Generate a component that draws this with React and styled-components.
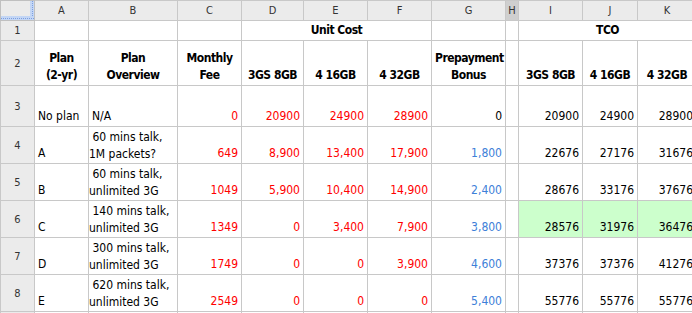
import styled, { createGlobalStyle } from "styled-components";

const GlobalStyle = createGlobalStyle`
  html, body {
    margin: 0;
    padding: 0;
    background: #ffffff;
    overflow: hidden;
  }
`;

const widths = [34, 54, 89, 64, 62, 64, 64, 74, 13, 64, 55, 59];
const letters = ["A", "B", "C", "D", "E", "F", "G", "H", "I", "J", "K"];

const RED = "#ff0000";
const BLUE = "#3d80d8";
const GREEN = "#ccffcc";

const rows = [
  {
    n: 3,
    height: 41,
    plan: "No plan",
    overview: "N/A",
    fee: "0",
    cost: ["20900", "24900", "28900"],
    bonus: "0",
    bonusColor: "#000",
    tco: ["20900", "24900", "28900"],
  },
  {
    n: 4,
    plan: "A",
    overview: " 60 mins talk,\n1M packets?",
    fee: "649",
    cost: ["8,900", "13,400", "17,900"],
    bonus: "1,800",
    tco: ["22676", "27176", "31676"],
  },
  {
    n: 5,
    plan: "B",
    overview: " 60 mins talk,\nunlimited 3G",
    fee: "1049",
    cost: ["5,900", "10,400", "14,900"],
    bonus: "2,400",
    tco: ["28676", "33176", "37676"],
  },
  {
    n: 6,
    plan: "C",
    overview: " 140 mins talk,\nunlimited 3G",
    fee: "1349",
    cost: ["0", "3,400", "7,900"],
    bonus: "3,800",
    tco: ["28576", "31976", "36476"],
    best: true,
  },
  {
    n: 7,
    plan: "D",
    overview: " 300 mins talk,\nunlimited 3G",
    fee: "1749",
    cost: ["0", "0", "3,900"],
    bonus: "4,600",
    tco: ["37376", "37376", "41276"],
  },
  {
    n: 8,
    plan: "E",
    overview: " 620 mins talk,\nunlimited 3G",
    fee: "2549",
    cost: ["0", "0", "0"],
    bonus: "5,400",
    tco: ["55776", "55776", "55776"],
  },
];

function App() {
  return (
    <>
      <GlobalStyle />
      <Sheet>
        <colgroup>
          {widths.map((w, i) => (
            <col key={i} style={{ width: w }} />
          ))}
        </colgroup>
        <thead>
          <tr>
            <Corner />
            {letters.map((l) => (
              <ColHead key={l} $selected={l === "H"}>
                {l}
              </ColHead>
            ))}
          </tr>
        </thead>
        <tbody>
          <Row $h={20}>
            <RowHead>1</RowHead>
            <Cell />
            <Cell />
            <Cell />
            <Cell colSpan={3} $align="center" $bold>
              Unit Cost
            </Cell>
            <Cell />
            <Cell />
            <Cell colSpan={3} $align="center" $bold>
              TCO
            </Cell>
          </Row>
          <Row $h={45}>
            <RowHead>2</RowHead>
            <Cell $align="center" $bold>
              Plan
              <br />
              (2-yr)
            </Cell>
            <Cell $align="center" $bold>
              Plan
              <br />
              Overview
            </Cell>
            <Cell $align="center" $bold>
              Monthly
              <br />
              Fee
            </Cell>
            <Cell $align="center" $bold>3GS 8GB</Cell>
            <Cell $align="center" $bold>4 16GB</Cell>
            <Cell $align="center" $bold>4 32GB</Cell>
            <Cell $align="center" $bold>
              Prepayment
              <br />
              Bonus
            </Cell>
            <Cell />
            <Cell $align="center" $bold>3GS 8GB</Cell>
            <Cell $align="center" $bold>4 16GB</Cell>
            <Cell $align="center" $bold>4 32GB</Cell>
          </Row>
          {rows.map((r) => (
            <Row key={r.n} $h={r.height || 37}>
              <RowHead>{r.n}</RowHead>
              <Cell>{r.plan}</Cell>
              <Cell $wrap={r.overview.includes("\n")}>{r.overview}</Cell>
              <Cell $align="right" $color={RED}>
                {r.fee}
              </Cell>
              {r.cost.map((c, i) => (
                <Cell key={i} $align="right" $color={RED}>
                  {c}
                </Cell>
              ))}
              <Cell $align="right" $color={r.bonusColor || BLUE}>
                {r.bonus}
              </Cell>
              <Cell />
              {r.tco.map((t, i) => (
                <Cell key={i} $align="right" $bg={r.best ? GREEN : undefined}>
                  {t}
                </Cell>
              ))}
            </Row>
          ))}
          <Row $h={37}>
            <RowHead />
            {letters.map((l) => (
              <Cell key={l} />
            ))}
          </Row>
        </tbody>
      </Sheet>
    </>
  );
}

const Sheet = styled.table`
  table-layout: fixed;
  border-collapse: collapse;
  width: 696px;
  font-family: "DejaVu Sans Condensed", "DejaVu Sans", sans-serif;
  font-size: 12px;
  color: #000;
`;

const Corner = styled.th`
  position: relative;
  height: 19px;
  padding: 0;
  background: #ebebeb;
  border: 1px solid #c0c0c0;

  &::before,
  &::after {
    content: "";
    position: absolute;
    background-color: #c3d6f5;
  }

  /* frozen-pane handles */
  &::before {
    right: 0;
    top: 0;
    width: 4px;
    bottom: 0;
    background-image: linear-gradient(#7d9fe0 50%, transparent 50%);
    background-size: 1px 2px;
    background-position: 2px 0;
    background-repeat: repeat-y;
  }

  &::after {
    left: 0;
    right: 0;
    bottom: 0;
    height: 4px;
    background-image: linear-gradient(90deg, #7d9fe0 50%, transparent 50%);
    background-size: 2px 1px;
    background-position: 0 2px;
    background-repeat: repeat-x;
  }
`;

const ColHead = styled.th`
  height: 19px;
  padding: 0;
  font-weight: normal;
  font-size: 11px;
  color: #333;
  text-align: center;
  background: ${(p) => (p.$selected ? "#cfcfcf" : "#ebebeb")};
  border: 1px solid #c8c8c8;
`;

const Row = styled.tr`
  height: ${(p) => p.$h}px;
`;

const RowHead = styled.th`
  padding: 0;
  font-weight: normal;
  font-size: 11px;
  color: #333;
  text-align: center;
  vertical-align: middle;
  background: #ebebeb;
  border: 1px solid #c8c8c8;
`;

const Cell = styled.td`
  padding: ${(p) => (p.$wrap ? "0 2px 0 0" : "0 3px 1px 3px")};
  vertical-align: bottom;
  line-height: 17px;
  text-align: ${(p) => p.$align || "left"};
  font-weight: ${(p) => (p.$bold ? "bold" : "normal")};
  letter-spacing: ${(p) => (p.$bold ? "-0.5px" : "0")};
  color: ${(p) => p.$color || "#000"};
  background: ${(p) => p.$bg || "transparent"};
  white-space: ${(p) => (p.$wrap ? "pre" : "nowrap")};
  overflow: hidden;
  border: 1px solid #c8c8c8;
`;

export default App;
